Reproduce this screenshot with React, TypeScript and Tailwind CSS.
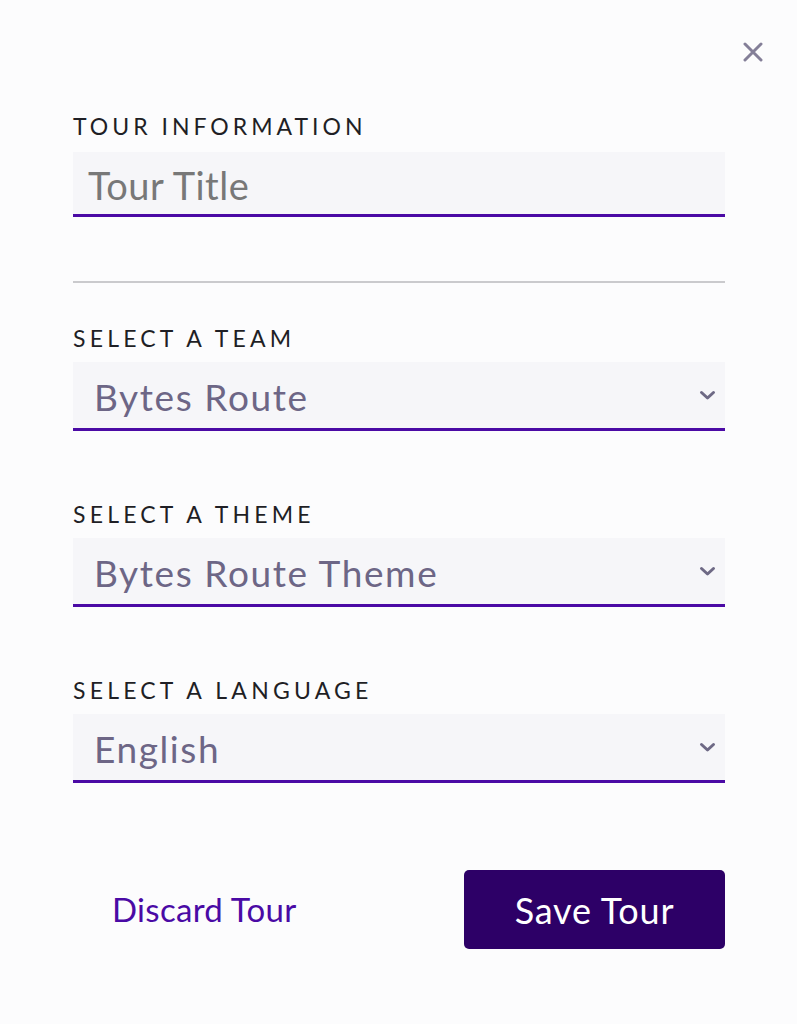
import React from "react";

function Chevron() {
  return (
    <svg width="17" height="11" viewBox="0 0 17 11" fill="none" className="shrink-0">
      <path d="M2.5 2.5 L8.5 8 L14.5 2.5" stroke="#6e6985" strokeWidth="3" strokeLinecap="round" strokeLinejoin="round" />
    </svg>
  );
}

function SelectField({ label, value }: { label: string; value: string }) {
  return (
    <div className="flex flex-col">
      <div className="text-[23px] leading-[28px] tracking-[4.2px] text-[#1f1f25]">{label}</div>
      <div className="mt-[10px] flex h-[69px] items-center justify-between bg-[#f6f6f9] border-b-[3px] border-[#4b0aa5] pl-[21px] pr-[9px]">
        <span className="text-[37px] leading-none tracking-[1.6px] text-[#6d6686] pt-[2px]">{value}</span>
        <Chevron />
      </div>
    </div>
  );
}

export default function App() {
  return (
    <div className="min-h-screen w-full bg-[#fcfcfd] font-['Lato',sans-serif]">
      <div className="flex justify-end pt-[42px] pr-[34px]">
        <svg width="20" height="20" viewBox="0 0 20 20" fill="none">
          <path d="M2 2 L18 18 M18 2 L2 18" stroke="#847f98" strokeWidth="3" strokeLinecap="round" />
        </svg>
      </div>
      <div className="pl-[73px] pr-[72px] pt-[50px] flex flex-col">
        <div className="text-[23px] leading-[28px] tracking-[4px] text-[#1f1f25]">TOUR INFORMATION</div>
        <div className="mt-[12px] flex h-[65px] items-center bg-[#f6f6f9] border-b-[3px] border-[#4b0aa5] pl-[15px]">
          <span className="text-[38px] leading-none tracking-[0.5px] text-[#787878] pt-[4px]">Tour Title</span>
        </div>
        <div className="mt-[64px] h-[2px] bg-[#cacacd]" />
        <div className="mt-[41px] flex flex-col gap-[69px]">
          <SelectField label="SELECT A TEAM" value="Bytes Route" />
          <SelectField label="SELECT A THEME" value="Bytes Route Theme" />
          <SelectField label="SELECT A LANGUAGE" value="English" />
        </div>
        <div className="mt-[87px] flex items-center justify-between">
          <button className="ml-[39px] text-[33px] leading-none tracking-[0.3px] text-[#4a0aa5]">Discard Tour</button>
          <button className="w-[261px] h-[79px] rounded-[5px] bg-[#2d0067] text-white text-[36px] leading-none tracking-[0.8px]">Save Tour</button>
        </div>
      </div>
    </div>
  );
}
